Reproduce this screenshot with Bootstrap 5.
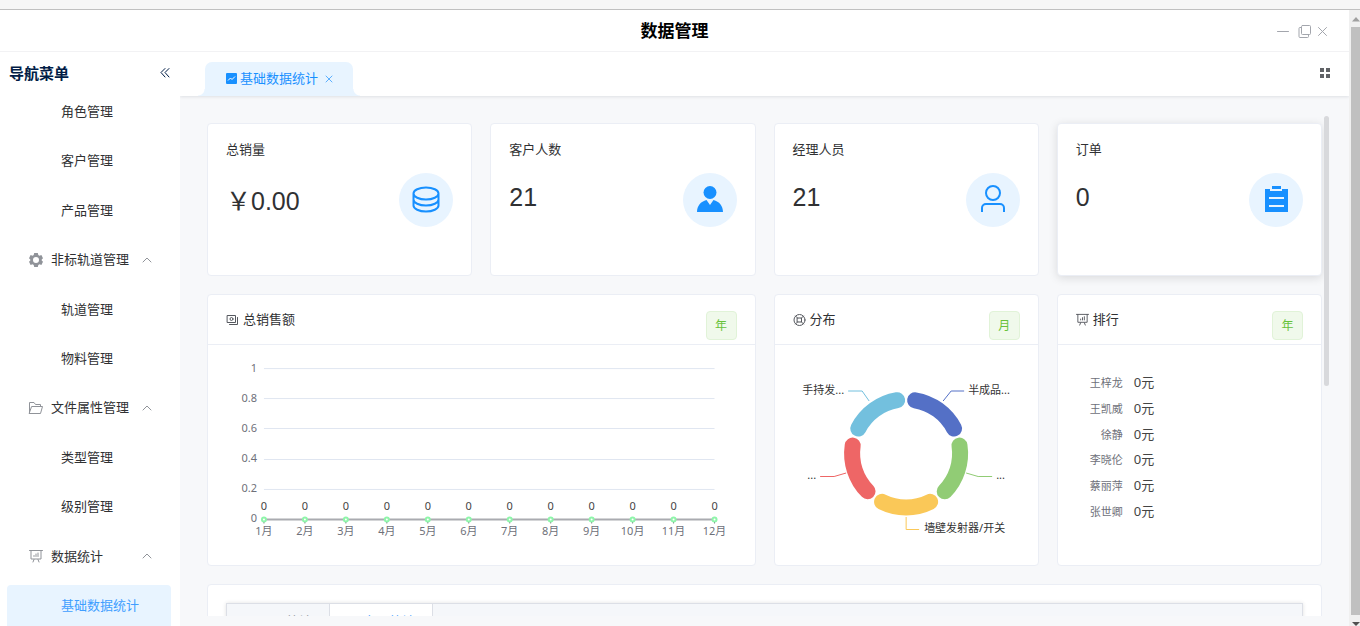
<!DOCTYPE html>
<html lang="zh-CN">
<head>
<meta charset="utf-8">
<meta name="viewport" content="width=device-width, initial-scale=1">
<title>数据管理</title>
<link href="https://cdn.jsdelivr.net/npm/bootstrap@5.3.0/dist/css/bootstrap.min.css" rel="stylesheet">
<style>
  :root { --line: #ebeef5; --ink: #303133; --blue: #1890ff; --pale: #e8f4ff; }
  body { font: 13px/17px "Liberation Sans", "Noto Sans CJK SC", sans-serif; color: var(--ink); background: #fff; }
  svg { display: block; flex: none; overflow: visible; }
  .icon-line { fill: none; stroke: currentColor; stroke-linecap: round; stroke-linejoin: round; }
  .bare { border: 0; background: none; padding: 0; color: inherit; }

  .top-strip { height: 10px; background: #f6f6f6; border-bottom: 1px solid #c0c0c0; }
  .win-bar { height: 42px; border-bottom: 1px solid #f2f2f4; }
  .win-bar h1 { font-size: 17px; line-height: 20px; font-weight: 700; color: #000; padding-top: 2px; }
  .win-tools { right: 21px; top: 14px; color: #a3a6ad; }

  .side { width: 180px; }
  .side-head { height: 39px; padding: 0 9px; color: #001c46; }
  .side-head h2 { font-size: 15px; line-height: 20px; font-weight: 700; }
  .menu-list { padding: 0 9px 0 7px; }
  .menu-link { height: 41px; display: flex; align-items: center; color: var(--ink); text-decoration: none; border-radius: 4px; }
  .menu-sub { padding-left: 54px; }
  .menu-group { padding: 0 19px 0 22px; gap: 8px; }
  .menu-group svg { color: #909399; }
  .menu-link.active { background: var(--pale); color: #409eff; border-radius: 4px 4px 0 0; }

  .tab-strip { height: 44px; background: #fff; padding: 10px 18px 0 25px; box-shadow: 0 1px 3px rgba(0,21,41,.1); }
  .page-tab { height: 34px; padding: 0 20px 2px 21px; background: var(--pale); color: var(--blue); border-radius: 7px 7px 0 0; }
  .page-tab .tab-icon { margin-right: 3px; }
  .page-tab .tab-close { margin-left: 7px; color: #5cb0ff; }
  .page-tab::before, .page-tab::after { content: ""; position: absolute; bottom: 0; width: 7px; height: 7px; }
  .page-tab::before { right: 100%; background: radial-gradient(circle at 0 0, transparent 6px, var(--pale) 7px); }
  .page-tab::after { left: 100%; background: radial-gradient(circle at 100% 0, transparent 6px, var(--pale) 7px); }

  .work { background: #f7f8fa; }
  .view { margin: 20px 18px 10px; padding-top: 7px; }
  .view-thumb { right: 2px; top: 0; width: 5px; height: 54%; border-radius: 3px; background: #d8d9dc; }
  .view > .row { --bs-gutter-x: 18px; margin: 0 0 18px; }
  .panel { background: #fff; border: 1px solid var(--line); border-radius: 4px; }
  .panel.raised { box-shadow: 0 2px 10px rgba(0,0,0,.12); }
  .stat { min-height: 153px; padding: 17px 18px; }
  .stat-line { margin-top: 15px; }
  .stat-value { font-size: 25px; line-height: 29px; margin-top: 10px; }
  .stat-value.money { line-height: 36px; }
  .disc { width: 54px; height: 54px; border-radius: 50%; background: var(--pale); color: var(--blue); }
  .panel-head { height: 50px; padding: 16px 18px 0; border-bottom: 1px solid var(--line); }
  .panel-head .title { gap: 4px; }
  .panel-head svg { color: #55585e; }
  .panel-body { height: 220px; }
  .btn-span { width: 31px; height: 29px; padding: 0; font-size: 12px; color: #67c23a; background: #f0f9eb; border: 1px solid #e1f3d8; border-radius: 4px; }
  .plot { width: 100%; height: 220px; font: 11px "Noto Sans", "Noto Sans CJK SC", sans-serif; }
  .rank { height: 154px; margin: 25px 0 0 32px; color: #444; font-family: "Noto Sans", "Noto Sans CJK SC", sans-serif; }
  .rank th { font-size: 11px; font-weight: 400; color: #6e7079; text-align: right; padding: 0 11px 0 0; }
  .rank td { padding: 0; }

  .sub-tabs { margin: 18px 18px 0; background: #f5f7fa; border: 1px solid #dcdfe6; box-shadow: 0 0 4px rgba(0,0,0,.12); }
  .sub-tab { height: 35px; padding: 0 17px; gap: 4px; border: 0; border-right: 1px solid #dcdfe6; background: none; color: #909399; font-size: 13px; }
  .sub-tab.active { background: #fff; color: #409eff; }

  .win-scroll { width: 11px; background: #f0f0f0; padding-left: 2px; }
  .win-scroll span { height: 17px; padding: 7px 0 0 1px; }
  .win-scroll span.down { height: 11px; padding-top: 7px; }
  .win-scroll i { background: #c0c0c0; }
</style>
</head>
<body class="vh-100 overflow-hidden d-flex flex-column">

<svg width="0" height="0" class="position-absolute" aria-hidden="true">
  <symbol id="i-up" viewBox="0 0 10 6"><path class="icon-line" d="M1 5 5 1l4 4"/></symbol>
  <symbol id="i-board" viewBox="0 0 14 14"><path class="icon-line" d="M.5 1.5h13M2 1.5v8.500h10v-8.500M5 10.500 4 13M9 10.500l1 2.500M5 7.500v-1M7 7.500v-2.500M9 7.500v-3.500"/></symbol>
</svg>

<div class="top-strip flex-shrink-0"></div>
<div class="d-flex flex-grow-1 overflow-hidden">
  <div class="d-flex flex-column flex-grow-1 overflow-hidden">

    <header class="win-bar position-relative d-flex align-items-center justify-content-center flex-shrink-0">
      <h1 class="m-0">数据管理</h1>
      <div class="win-tools position-absolute d-flex align-items-center">
        <button class="bare me-2" type="button" aria-label="最小化"><svg width="14" height="14"><path class="icon-line" d="M1.500 7.500h11"/></svg></button>
        <button class="bare me-1" type="button" aria-label="还原"><svg width="14" height="14"><path class="icon-line" d="M4.500 1.500h7a1 1 0 0 1 1 1v7a1 1 0 0 1-1 1h-7a1 1 0 0 1-1-1v-7a1 1 0 0 1 1-1ZM3.500 3.500h-1.500a1 1 0 0 0-1 1v8a1 1 0 0 0 1 1h7.500a1 1 0 0 0 1-1v-2"/></svg></button>
        <button class="bare" type="button" aria-label="关闭"><svg width="12" height="14"><path class="icon-line" d="m2.500 3.500 8 8m0-8-8 8"/></svg></button>
      </div>
    </header>

    <div class="d-flex flex-grow-1 overflow-hidden">
      <nav class="side d-flex flex-column flex-shrink-0">
        <div class="side-head d-flex align-items-center justify-content-between flex-shrink-0 pt-1">
          <h2 class="m-0">导航菜单</h2>
          <button class="bare" type="button" aria-label="收起菜单"><svg width="11" height="16"><path class="icon-line" stroke="#5a6472" d="M5 2.500 1 6.500l4 4.500M9 2.500 5 6.500l4 4.500"/></svg></button>
        </div>
        <div class="menu-list d-flex flex-column justify-content-between flex-grow-1 overflow-hidden">
          <a class="menu-link menu-sub" href="#">角色管理</a>
          <a class="menu-link menu-sub" href="#">客户管理</a>
          <a class="menu-link menu-sub" href="#">产品管理</a>
          <a class="menu-link menu-group" href="#">
            <svg width="14" height="14" viewBox="0 0 14 14"><path fill="currentColor" fill-rule="evenodd" d="M5.200 0h3.600l.5 2 1.100.7 2-.6L14 5.200 12.700 6.600v.8L14 8.800l-1.600 3.100-2-.6-1.100.7-.5 2H5.200l-.5-2-1.100-.7-2 .6L0 8.800l1.300-1.400v-.8L0 5.200l1.600-3.100 2 .6L4.700 2ZM7 4a3 3 0 1 0 0 6 3 3 0 0 0 0-6Z"/></svg>
            <span class="flex-grow-1">非标轨道管理</span><svg width="10" height="6"><use href="#i-up"/></svg></a>
          <a class="menu-link menu-sub" href="#">轨道管理</a>
          <a class="menu-link menu-sub" href="#">物料管理</a>
          <a class="menu-link menu-group" href="#">
            <svg width="14" height="14" viewBox="0 0 14 14"><path class="icon-line" d="M.5 12.500v-11h4.500l1.500 2h5v2M.5 12.500h11l2-7H3Z"/></svg>
            <span class="flex-grow-1">文件属性管理</span><svg width="10" height="6"><use href="#i-up"/></svg></a>
          <a class="menu-link menu-sub" href="#">类型管理</a>
          <a class="menu-link menu-sub" href="#">级别管理</a>
          <a class="menu-link menu-group" href="#">
            <svg width="14" height="14"><use href="#i-board"/></svg>
            <span class="flex-grow-1">数据统计</span><svg width="10" height="6"><use href="#i-up"/></svg></a>
          <a class="menu-link menu-sub active" href="#">基础数据统计</a>
        </div>
      </nav>

      <main class="work d-flex flex-column flex-grow-1 overflow-hidden">
        <div class="tab-strip d-flex justify-content-between flex-shrink-0">
          <div class="page-tab position-relative d-flex align-items-center">
            <svg class="tab-icon" width="11" height="11"><rect width="11" height="11" rx="1" fill="#1890ff"/><path d="m2 7.500 2.500-2.500 1.500 1.500 3-3" fill="none" stroke="#fff"/></svg>
            <a class="text-reset text-decoration-none" href="#">基础数据统计</a>
            <button class="bare tab-close" type="button" aria-label="关闭标签"><svg width="8" height="8"><path class="icon-line" d="m1 2 6 6m0-6-6 6"/></svg></button>
          </div>
          <button class="bare align-self-start pt-1" type="button" aria-label="更多"><svg width="12" height="14"><path fill="#606266" d="M1 2h4v4H1zM7 2h4v4H7zM1 8h4v4H1zM7 8h4v4H7z"/></svg></button>
        </div>

        <div class="view position-relative flex-grow-1 overflow-hidden">
          <div class="row">
            <div class="col-3"><section class="panel stat">
              <div>总销量</div>
              <div class="stat-line d-flex justify-content-between align-items-start"><div class="stat-value money">￥0.00</div>
                <div class="disc d-flex align-items-center justify-content-center"><svg width="28" height="28"><path class="icon-line" stroke-width="2" d="M1.500 7.500c0-3.300 5.600-6 12.500-6s12.500 2.700 12.500 6-5.600 6-12.500 6S1.500 10.800 1.500 7.500M1.500 7.500v6c0 3.300 5.600 6 12.500 6s12.500-2.700 12.500-6v-6M1.500 13.500v6c0 3.300 5.600 6 12.500 6s12.500-2.700 12.500-6v-6"/></svg></div></div>
            </section></div>
            <div class="col-3"><section class="panel stat">
              <div>客户人数</div>
              <div class="stat-line d-flex justify-content-between align-items-start"><div class="stat-value">21</div>
                <div class="disc d-flex align-items-center justify-content-center"><svg width="28" height="28" fill="currentColor"><circle cx="14" cy="6.500" r="6.500"/><path d="M1 26c0-6 3.700-10.500 9.500-12L14 19l3.500-5C23.300 15.500 27 20 27 26Z"/></svg></div></div>
            </section></div>
            <div class="col-3"><section class="panel stat">
              <div>经理人员</div>
              <div class="stat-line d-flex justify-content-between align-items-start"><div class="stat-value">21</div>
                <div class="disc d-flex align-items-center justify-content-center"><svg width="28" height="28"><g fill="none" stroke="currentColor" stroke-width="2"><circle cx="14" cy="7" r="7"/><path d="M3 26v-4a4 4 0 0 1 4-4h14a4 4 0 0 1 4 4v4"/></g></svg></div></div>
            </section></div>
            <div class="col-3"><section class="panel stat raised">
              <div>订单</div>
              <div class="stat-line d-flex justify-content-between align-items-start"><div class="stat-value">0</div>
                <div class="disc d-flex align-items-center justify-content-center"><svg width="28" height="28" fill="currentColor"><path fill-rule="evenodd" d="M3 3h5v2h12V3h6v23H3ZM7 11v2h15v-2ZM7 19v2h15v-2Z"/><path d="M10 0h9v3h-9z"/></svg></div></div>
            </section></div>
          </div>

          <div class="row">
            <div class="col-6"><section class="panel">
              <div class="panel-head d-flex justify-content-between align-items-start">
                <div class="title d-flex align-items-center"><svg width="13" height="12"><path class="icon-line" d="M1.500 1.500h8v7h-8ZM11.500 3.500v7h-8"/><circle class="icon-line" cx="5.500" cy="5" r="1.500"/></svg>总销售额</div>
                <button class="btn btn-span" type="button">年</button>
              </div>
              <div class="panel-body"><svg class="plot" id="sales" viewBox="0 0 547 220" role="img" aria-label="总销售额"></svg></div>
            </section></div>
            <div class="col-3"><section class="panel">
              <div class="panel-head d-flex justify-content-between align-items-start">
                <div class="title d-flex align-items-center"><svg width="13" height="12"><circle class="icon-line" cx="6.500" cy="6" r="5.500"/><path class="icon-line" d="M4.500 4h4v4h-4ZM2.500 2l2 2M10.500 2l-2 2M2.500 10l2-2M10.500 10l-2-2"/></svg>分布</div>
                <button class="btn btn-span" type="button">月</button>
              </div>
              <div class="panel-body"><svg class="plot" viewBox="0 0 263 220" role="img" aria-label="分布">
                <defs><path id="slice" d="M9 -53.200A54 54 0 0 1 47.900 -25"/></defs>
                <g transform="translate(131 108.500)" fill="none" stroke-width="16" stroke-linecap="round">
                  <use href="#slice" stroke="#5470c6"/>
                  <use href="#slice" stroke="#91cc75" transform="rotate(72)"/>
                  <use href="#slice" stroke="#fac858" transform="rotate(144)"/>
                  <use href="#slice" stroke="#ee6666" transform="rotate(216)"/>
                  <use href="#slice" stroke="#73c0de" transform="rotate(288)"/>
                </g>
                <g fill="none">
                  <path stroke="#5470c6" d="m168 56 8-10h13"/>
                  <path stroke="#91cc75" d="m191 128 12 3.500h14"/>
                  <path stroke="#fac858" d="M131 172v12.500h13"/>
                  <path stroke="#ee6666" d="m71 128-12 3.500H45"/>
                  <path stroke="#73c0de" d="m94 56-7-10H73"/>
                </g>
                <g fill="#333">
                  <text x="193" y="49">半成品...</text>
                  <text x="221" y="134">...</text>
                  <text x="149" y="187">墙壁发射器/开关</text>
                  <text x="41" y="134" text-anchor="end">...</text>
                  <text x="69" y="49" text-anchor="end">手持发...</text>
                </g>
              </svg></div>
            </section></div>
            <div class="col-3"><section class="panel">
              <div class="panel-head d-flex justify-content-between align-items-start">
                <div class="title d-flex align-items-center"><svg width="13" height="13"><use href="#i-board"/></svg>排行</div>
                <button class="btn btn-span" type="button">年</button>
              </div>
              <div class="panel-body overflow-hidden">
                <table class="rank">
                  <tbody>
                    <tr><th scope="row">王梓龙</th><td>0元</td></tr>
                    <tr><th scope="row">王凯威</th><td>0元</td></tr>
                    <tr><th scope="row">徐静</th><td>0元</td></tr>
                    <tr><th scope="row">李晓伦</th><td>0元</td></tr>
                    <tr><th scope="row">蔡丽萍</th><td>0元</td></tr>
                    <tr><th scope="row">张世卿</th><td>0元</td></tr>
                  </tbody>
                </table>
              </div>
            </section></div>
          </div>

          <div class="row">
            <div class="col-12"><section class="panel">
              <div class="sub-tabs d-flex">
                <button class="sub-tab d-flex align-items-center" type="button"><svg width="12" height="12"><path class="icon-line" d="M1.500 1v10h10M4 4l2 2M10 2 6 6"/></svg><span>员工统计</span></button>
                <button class="sub-tab active d-flex align-items-center" type="button"><svg width="12" height="12"><path class="icon-line" d="M1.500 1v10h10M4 8v2M8 5v5"/></svg><span>产品统计</span></button>
              </div>
            </section></div>
          </div>
          <div class="view-thumb position-absolute"></div>
        </div>
      </main>
    </div>
  </div>

  <div class="win-scroll d-flex flex-column flex-shrink-0 overflow-hidden" aria-hidden="true">
    <span><svg width="9" height="5"><path fill="#a0a0a0" d="M0 4.500 4 0l4 4.500z"/></svg></span>
    <i class="flex-grow-1"></i>
    <span class="down"><svg width="9" height="5"><path fill="#505050" d="M0 0h8L4 4z"/></svg></span>
  </div>
</div>

<script src="https://cdn.jsdelivr.net/npm/bootstrap@5.3.0/dist/js/bootstrap.bundle.min.js"></script>
<script>
  // Monthly sales line: y scale 0 to 1, one point per month
  const sales = Array(12).fill(0);
  const left = 56, right = 507, top0 = 23.5, base = 174.5;
  let out = '';
  for (let i = 0; i <= 5; i++) {
    const y = Math.round(base - (base - top0) * i / 5 - .5) + .5;
    out += `<path d="M${left} ${y}H${right}" stroke="${i ? '#e0e6f1' : '#aaabb0'}" stroke-width="${i ? 1 : 2}"/>
      <text x="49" y="${y + 3}" text-anchor="end" fill="#6e7079">${i * 2 / 10}</text>`;
  }
  sales.forEach((v, i) => {
    const x = left + (right - left) * i / 11, y = base - v * (base - top0);
    out += `<path d="M${x} ${base}v4" stroke="#6e7079"/>
      <circle cx="${x}" cy="${y}" r="2" fill="#fff" stroke="#8ff5aa" stroke-width="2"/>
      <text x="${x}" y="${y - 9}" text-anchor="middle" fill="#444">${v}</text>
      <text x="${x}" y="190" text-anchor="middle" fill="#6e7079">${i + 1}月</text>`;
  });
  document.getElementById('sales').innerHTML = out;
</script>
</body>
</html>
